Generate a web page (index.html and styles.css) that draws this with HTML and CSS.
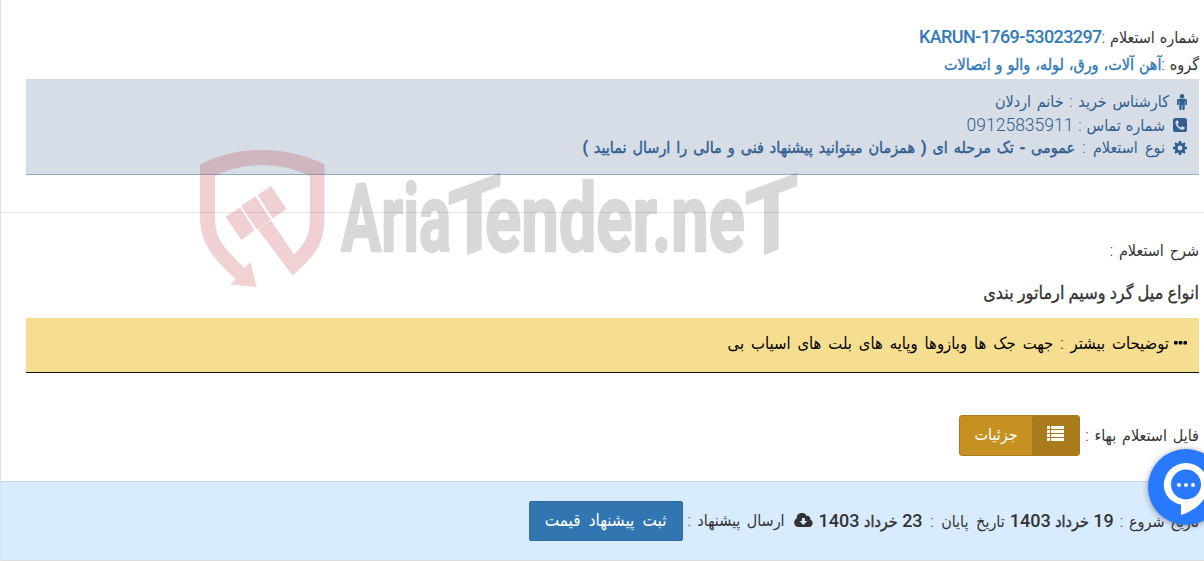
FILE: index.html
```html
<!DOCTYPE html>
<html lang="fa" dir="rtl">
<head>
    <meta charset="UTF-8">
    <meta name="viewport" content="width=device-width, initial-scale=1.0">
    <title>AriaTender.neT</title>
    <link rel="stylesheet" href="styles.css">
</head>
<body>
    <div class="tender">
        <div class="summary">
            <div class="line number">شماره استعلام :<a href="#" class="value code">KARUN-1769-53023297</a></div>
            <div class="line group">گروه :<a href="#" class="value">آهن آلات، ورق، لوله، والو و اتصالات</a></div>

            <div class="contact">
                <div class="contact-row buyer">
                    <svg class="icon" width="10" height="16" viewBox="0 0 10 16"><circle cx="5" cy="2.3" r="2.2"/><path d="M2 4.8h6a2 2 0 0 1 2 2v3.4a.9.9 0 0 1-1.8 0V7.3h-.5V15a1.1 1.1 0 0 1-2.3 0v-4.2h-.8V15a1.1 1.1 0 0 1-2.3 0V7.3h-.5v2.9a.9.9 0 0 1-1.8 0V6.8a2 2 0 0 1 2-2z"/></svg>
                    <span>کارشناس خرید : خانم اردلان</span>
                </div>
                <div class="contact-row phone">
                    <svg class="icon" width="14" height="14" viewBox="0 0 14 14"><path fill-rule="evenodd" d="M2.6 0h8.8A2.6 2.6 0 0 1 14 2.6v8.8a2.6 2.6 0 0 1-2.6 2.6H2.6A2.6 2.6 0 0 1 0 11.4V2.6A2.6 2.6 0 0 1 2.6 0zM4.2 2.2C2.9 2.8 2.2 3.6 2.4 4.8c.6 3.5 3.3 6.3 6.8 7 1.2.2 2-.5 2.6-1.8l-.1-.6-2.3-1.2c-.6 0-.8 1.1-1.4 1.2C6.8 9.3 5 7.6 4.5 6.3c0-.7 1.1-.9 1.2-1.5L4.8 2.3z"/></svg>
                    <span>شماره تماس : <span class="digits">09125835911</span></span>
                </div>
                <div class="contact-row type">
                    <svg class="icon" width="14" height="14" viewBox="0 0 14 14"><path fill-rule="evenodd" d="M5.9 0h2.2l.4 1.9 1.1.5L11.2 1.3l1.5 1.5-1.1 1.6.5 1.1 1.9.4v2.2l-1.9.4-.5 1.1 1.1 1.6-1.5 1.5-1.6-1.1-1.1.5-.4 1.9H5.9l-.4-1.9-1.1-.5-1.6 1.1-1.5-1.5 1.1-1.6-.5-1.1L0 8.1V5.9l1.9-.4.5-1.1L1.3 2.8l1.5-1.5 1.6 1.1 1.1-.5zM7 4.6a2.4 2.4 0 1 0 0 4.8 2.4 2.4 0 0 0 0-4.8z"/></svg>
                    <span>نوع استعلام : <b>عمومی - تک مرحله ای ( همزمان میتوانید پیشنهاد فنی و مالی را ارسال نمایید )</b></span>
                </div>
            </div>
        </div>

        <div class="details">
            <div class="line label">شرح استعلام :</div>
            <h2 class="subject">انواع میل گرد وسیم ارماتور بندی</h2>
            <div class="notes">
                <svg class="icon" width="13" height="5" viewBox="0 0 13 5"><rect width="3.6" height="3.6" rx="1"/><rect x="4.7" width="3.6" height="3.6" rx="1"/><rect x="9.4" width="3.6" height="3.6" rx="1"/></svg>
                <span>توضیحات بیشتر : جهت جک ها وبازوها وپایه های بلت های اسیاب بی</span>
            </div>
            <div class="file">
                <span>فایل استعلام بهاء :</span>
                <a href="#" class="btn-details">
                    <span class="btn-icon"><svg width="17" height="15" viewBox="0 0 17 15"><path d="M0 0h3v3H0zM4 0h13v3H4zM0 4h3v3H0zM4 4h13v3H4zM0 8h3v3H0zM4 8h13v3H4zM0 12h3v3H0zM4 12h13v3H4z"/></svg></span>
                    <span class="btn-text">جزئیات</span>
                </a>
            </div>
        </div>

        <div class="footer">
            <span class="start">تاریخ شروع : <b><span class="digits">19</span> خرداد <span class="digits">1403</span></b></span>
            <span class="end">تاریخ پایان : <b><span class="digits">23</span> خرداد <span class="digits">1403</span></b></span>
            <svg class="cloud" width="19" height="14" viewBox="0 0 19 14"><path fill-rule="evenodd" d="M4.5 14A4.5 4.5 0 0 1 2.6 5.5 5.3 5.3 0 0 1 12.7 3a2.8 2.8 0 0 1 3.5 3.5A3.9 3.9 0 0 1 15.1 14zM8 5v3H5.6L9.4 12l3.9-4h-2.5V5z"/></svg>
            <span class="send">ارسال پیشنهاد :</span>
            <a href="#" class="btn-offer">ثبت پیشنهاد قیمت</a>
        </div>
    </div>

    <svg class="watermark" width="604" height="142" viewBox="198 148 604 142" direction="ltr">
        <g class="shield">
            <path d="M200 164.5Q228 150 262 150T324.500 164.500V216C324.500 244 316 255 292.500 275.500L258 229.500 271 220.500 294 254.500C306 243 310 235 310 216V176Q288 165 262 165T215 176V218C215 242 228 251 244.500 268L250.500 261.500 256.500 287 230.500 284.500 235.500 279C216 261 200 245 200 217z"/>
            <path d="M225.500 217 240 207.500 254.700 230.300 241.300 239.700zM241 206 255.500 196.300 271 220 257 229.500zM257.700 195 271 186 286.700 209.300 272.700 218.300z"/>
        </g>
        <g class="wordmark">
            <text x="341" y="251" textLength="110" lengthAdjust="spacingAndGlyphs">Aria</text>
            <text transform="translate(448 261) skewY(-20.5)" textLength="53" lengthAdjust="spacingAndGlyphs">T</text>
            <text x="485" y="251" textLength="260" lengthAdjust="spacingAndGlyphs">ender.ne</text>
            <text transform="translate(745 261) skewY(-20.5)" textLength="53" lengthAdjust="spacingAndGlyphs">T</text>
        </g>
    </svg>

    <a href="#" class="chat">
        <svg width="76" height="76" viewBox="0 0 76 76"><path d="M38 14a22.200 22.200 0 0 1 22.200 22.200C60.200 49 49 61 33 66V55.500A20 20 0 0 1 15.800 36.200 22.200 22.200 0 0 1 38 14z"/><circle class="hole" cx="38" cy="35.500" r="15"/><circle cx="31" cy="36" r="2"/><circle cx="38" cy="36" r="2"/><circle cx="45" cy="36" r="2"/></svg>
    </a>
</body>
</html>
```
FILE: styles.css
```css
* {
    box-sizing: border-box;
}

body {
    margin: 0;
    position: relative;
    width: 1204px;
    height: 561px;
    overflow: hidden;
    background: #fff;
    color: #333;
    font-family: Roboto, 'DejaVu Sans Condensed', 'DejaVu Sans', sans-serif;
    font-size: 16px;
    font-weight: 300;
    word-spacing: 1px;
}

a {
    text-decoration: none;
}

b,
.value {
    font-weight: 500;
    -webkit-text-stroke: 0.4px;
}

.digits {
    font-size: 17.5px;
}

b .digits,
.code {
    font-size: 18px;
    letter-spacing: -0.5px;
    -webkit-text-stroke: 0;
}

.icon {
    flex: none;
    fill: currentColor;
}

.tender {
    height: 561px;
    border-left: 1px solid #dee3e9;
    border-bottom: 1px solid #ddd;
}

.summary {
    height: 213px;
    padding: 24px 5px 0 25px;
    border-bottom: 1px solid #e7e7e7;
}

.line {
    height: 27px;
    line-height: 26px;
    white-space: nowrap;
}

.group {
    line-height: 28px;
}

.number .code {
    letter-spacing: -0.6px;
}

.value {
    color: #337ab7;
}

.contact {
    height: 96px;
    margin-top: 1px;
    padding: 11px 12px;
    background: #d6dde7;
    border-bottom: 1px solid #91afca;
    color: #31608f;
}

.contact-row {
    display: flex;
    align-items: center;
    gap: 8px;
    height: 23px;
    white-space: nowrap;
}

.buyer {
    word-spacing: 1.8px;
}

.type {
    word-spacing: 3.3px;
}

.type b {
    word-spacing: 2px;
}

.label {
    word-spacing: 2px;
}

.details {
    height: 268px;
    padding: 25px 5px 0 25px;
}

.subject {
    margin: 0;
    height: 53px;
    line-height: 55px;
    font-size: 18px;
    font-weight: 500;
    word-spacing: -0.4px;
    -webkit-text-stroke: 0.3px;
}

.notes {
    display: flex;
    align-items: center;
    gap: 5px;
    height: 55px;
    padding: 0 12px 4px;
    background: #f6de91;
    border-bottom: 1px solid #111;
    color: #000;
    font-size: 16.5px;
    word-spacing: 2.9px;
}

.file {
    display: flex;
    align-items: center;
    gap: 5px;
    height: 41px;
    margin-top: 42px;
    word-spacing: 2px;
}

.btn-details {
    display: flex;
    width: 121px;
    height: 41px;
    border: 1px solid #a97b1d;
    border-radius: 3px;
    background: #c79121;
    color: #fff;
    font-weight: 500;
}

.btn-icon {
    display: flex;
    align-items: center;
    justify-content: center;
    width: 47px;
    padding-bottom: 4px;
    border-radius: 3px;
    background: #a97b1d;
}

.btn-icon svg {
    fill: #fff;
}

.btn-text {
    flex: 1;
    line-height: 38px;
    text-align: center;
}

.footer {
    display: flex;
    align-items: center;
    height: 79px;
    padding: 0 5px;
    background: #d9ecff;
    border-top: 1px solid #c7d9e8;
    white-space: nowrap;
}

.start,
.end,
.send {
    padding-bottom: 2px;
}

.start {
    word-spacing: 2px;
}

.start b,
.end b {
    word-spacing: 0.5px;
}

.end {
    margin-right: 5px;
    word-spacing: 3.7px;
}

.send {
    word-spacing: 2.5px;
}

.cloud {
    margin: 0 6px 3px 9px;
    fill: #333;
}

.btn-offer {
    width: 154px;
    height: 40px;
    margin-right: 5px;
    border: 1px solid #2e6da4;
    border-radius: 2px;
    background: #3276b1;
    color: #fff;
    font-size: 17px;
    font-weight: 500;
    line-height: 36px;
    text-align: center;
    word-spacing: 4px;
}

/* logo laid over the content */
.watermark {
    position: absolute;
    top: 148px;
    left: 198px;
    overflow: visible;
    pointer-events: none;
}

.shield {
    fill: #b81c22;
    opacity: 0.2;
}

.wordmark {
    fill: #000;
    stroke: #000;
    stroke-width: 2.5px;
    stroke-linejoin: round;
    font-family: Roboto, sans-serif;
    font-size: 95px;
    font-weight: 700;
    word-spacing: 0;
    opacity: 0.15;
}

.chat {
    position: absolute;
    top: 449px;
    left: 1148px;
    width: 76px;
    height: 76px;
    border-radius: 50%;
    background: #2979ff;
    box-shadow: 0 1px 6px rgba(0, 0, 0, 0.4);
}

.chat svg {
    display: block;
    fill: #fff;
}

.chat .hole {
    fill: #2979ff;
}
```
